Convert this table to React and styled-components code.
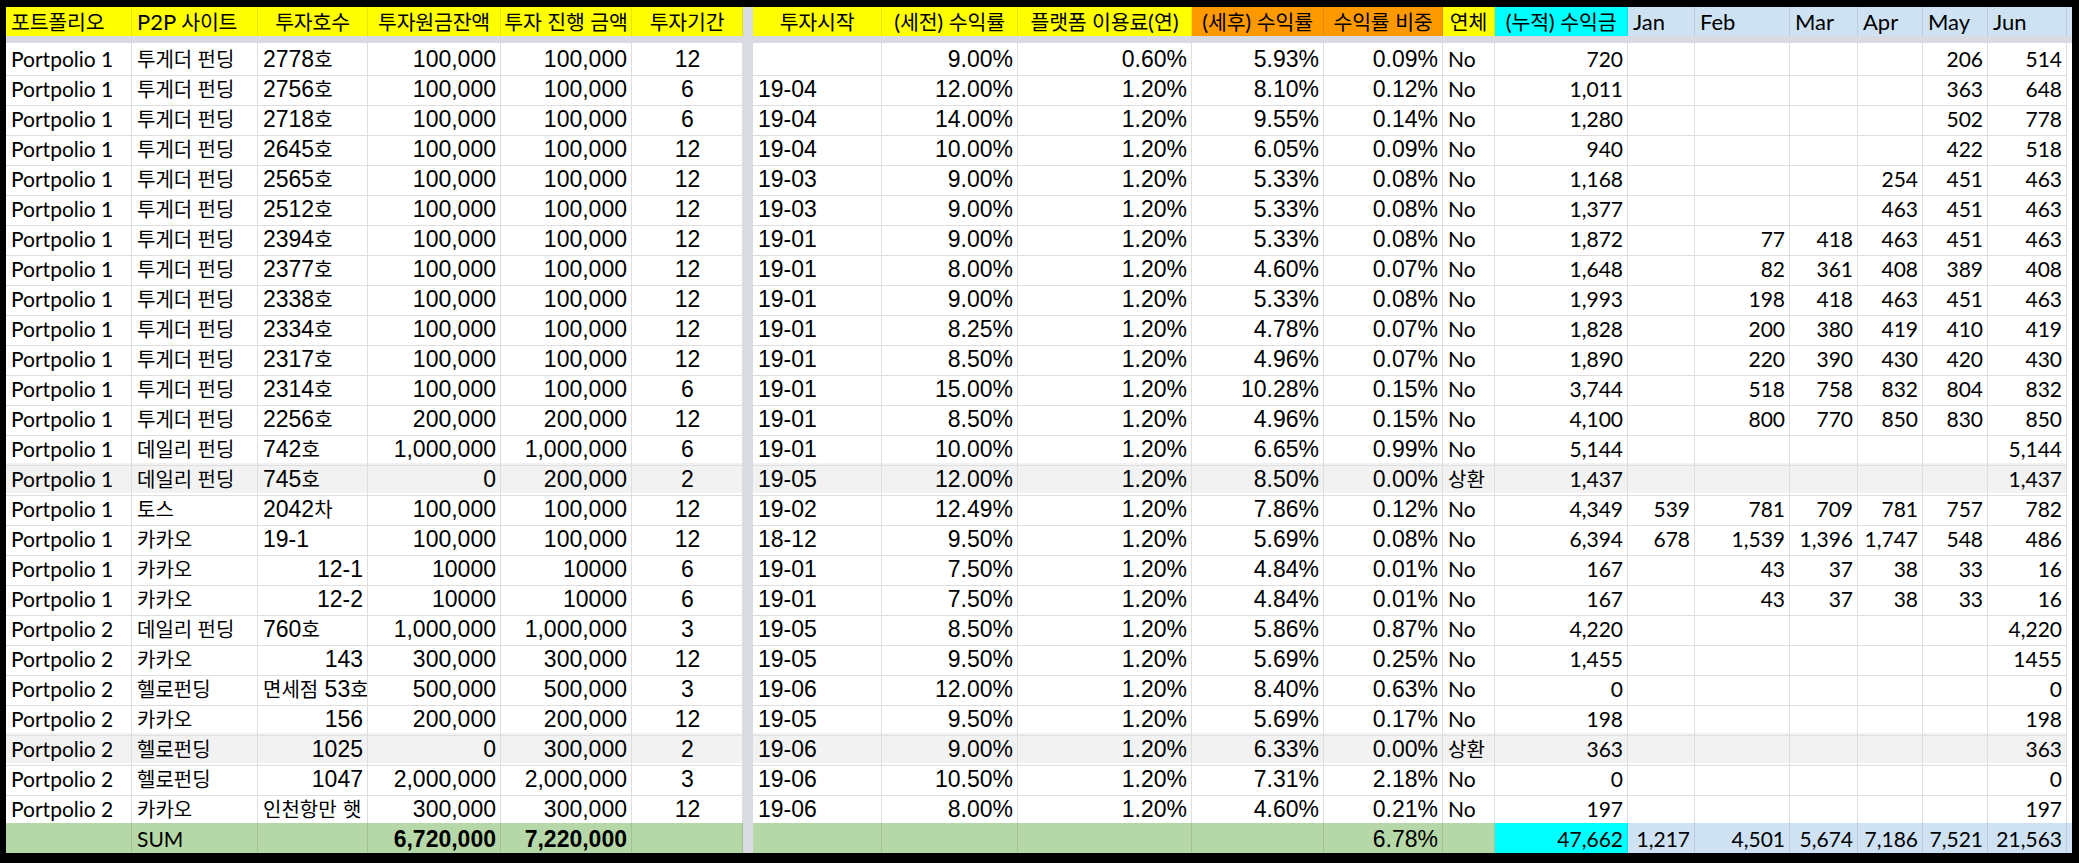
import React from "react";
import styled, { createGlobalStyle } from "styled-components";

const GlobalStyle = createGlobalStyle`
  html, body {
    margin: 0;
    padding: 0;
    background: #000;
  }
  body {
    font-family: "Lato", "Noto Sans CJK KR", sans-serif;
    color: #000;
  }
`;

// column widths in px, gridline included; the 10px one is the frozen-pane band
const COLS = [126, 126, 110, 133, 131, 111, 10, 129, 136, 174, 132, 119, 52, 133, 67, 95, 68, 65, 65, 79, 5];

const YELLOW = "#ffff00";
const ORANGE = "#ff9900";
const CYAN = "#00ffff";
const BLUE = "#cfe2f3";
const GREEN = "#b6d7a8";
const BAND = "#d9dbe0";

const META = [
  { font: "cal", align: "left", head: YELLOW, headAlign: "left" },
  { font: "cal", align: "left", head: YELLOW, headAlign: "left" },
  { font: "ari", align: "auto", head: YELLOW },
  { font: "ari", align: "right", head: YELLOW },
  { font: "ari", align: "right", head: YELLOW },
  { font: "ari", align: "center", head: YELLOW },
  { font: "ari", align: "left", head: YELLOW },
  { font: "ari", align: "right", head: YELLOW },
  { font: "ari", align: "right", head: YELLOW },
  { font: "ari", align: "right", head: ORANGE },
  { font: "ari", align: "right", head: ORANGE },
  { font: "cal", align: "left", head: YELLOW },
  { font: "cal", align: "right", head: CYAN },
  { font: "cal", align: "right", head: BLUE, headAlign: "left" },
  { font: "cal", align: "right", head: BLUE, headAlign: "left" },
  { font: "cal", align: "right", head: BLUE, headAlign: "left" },
  { font: "cal", align: "right", head: BLUE, headAlign: "left" },
  { font: "cal", align: "right", head: BLUE, headAlign: "left" },
  { font: "cal", align: "right", head: BLUE, headAlign: "left" },
];

const HEADERS = [
  "포트폴리오", "P2P 사이트", "투자호수", "투자원금잔액", "투자 진행 금액", "투자기간",
  "투자시작", "(세전) 수익률", "플랫폼 이용료(연)", "(세후) 수익률", "수익률 비중", "연체",
  "(누적) 수익금", "Jan", "Feb", "Mar", "Apr", "May", "Jun",
];

const P1 = "Portpolio 1";
const P2 = "Portpolio 2";
const TG = "투게더 펀딩";
const DL = "데일리 펀딩";
const KK = "카카오";
const HL = "헬로펀딩";
const H = "100,000";

const ROWS = [
  [P1, TG, "2778호", H, H, "12", "", "9.00%", "0.60%", "5.93%", "0.09%", "No", "720", "", "", "", "", "206", "514"],
  [P1, TG, "2756호", H, H, "6", "19-04", "12.00%", "1.20%", "8.10%", "0.12%", "No", "1,011", "", "", "", "", "363", "648"],
  [P1, TG, "2718호", H, H, "6", "19-04", "14.00%", "1.20%", "9.55%", "0.14%", "No", "1,280", "", "", "", "", "502", "778"],
  [P1, TG, "2645호", H, H, "12", "19-04", "10.00%", "1.20%", "6.05%", "0.09%", "No", "940", "", "", "", "", "422", "518"],
  [P1, TG, "2565호", H, H, "12", "19-03", "9.00%", "1.20%", "5.33%", "0.08%", "No", "1,168", "", "", "", "254", "451", "463"],
  [P1, TG, "2512호", H, H, "12", "19-03", "9.00%", "1.20%", "5.33%", "0.08%", "No", "1,377", "", "", "", "463", "451", "463"],
  [P1, TG, "2394호", H, H, "12", "19-01", "9.00%", "1.20%", "5.33%", "0.08%", "No", "1,872", "", "77", "418", "463", "451", "463"],
  [P1, TG, "2377호", H, H, "12", "19-01", "8.00%", "1.20%", "4.60%", "0.07%", "No", "1,648", "", "82", "361", "408", "389", "408"],
  [P1, TG, "2338호", H, H, "12", "19-01", "9.00%", "1.20%", "5.33%", "0.08%", "No", "1,993", "", "198", "418", "463", "451", "463"],
  [P1, TG, "2334호", H, H, "12", "19-01", "8.25%", "1.20%", "4.78%", "0.07%", "No", "1,828", "", "200", "380", "419", "410", "419"],
  [P1, TG, "2317호", H, H, "12", "19-01", "8.50%", "1.20%", "4.96%", "0.07%", "No", "1,890", "", "220", "390", "430", "420", "430"],
  [P1, TG, "2314호", H, H, "6", "19-01", "15.00%", "1.20%", "10.28%", "0.15%", "No", "3,744", "", "518", "758", "832", "804", "832"],
  [P1, TG, "2256호", "200,000", "200,000", "12", "19-01", "8.50%", "1.20%", "4.96%", "0.15%", "No", "4,100", "", "800", "770", "850", "830", "850"],
  [P1, DL, "742호", "1,000,000", "1,000,000", "6", "19-01", "10.00%", "1.20%", "6.65%", "0.99%", "No", "5,144", "", "", "", "", "", "5,144"],
  [P1, DL, "745호", "0", "200,000", "2", "19-05", "12.00%", "1.20%", "8.50%", "0.00%", "상환", "1,437", "", "", "", "", "", "1,437"],
  [P1, "토스", "2042차", H, H, "12", "19-02", "12.49%", "1.20%", "7.86%", "0.12%", "No", "4,349", "539", "781", "709", "781", "757", "782"],
  [P1, KK, "19-1", H, H, "12", "18-12", "9.50%", "1.20%", "5.69%", "0.08%", "No", "6,394", "678", "1,539", "1,396", "1,747", "548", "486"],
  [P1, KK, "12-1", "10000", "10000", "6", "19-01", "7.50%", "1.20%", "4.84%", "0.01%", "No", "167", "", "43", "37", "38", "33", "16"],
  [P1, KK, "12-2", "10000", "10000", "6", "19-01", "7.50%", "1.20%", "4.84%", "0.01%", "No", "167", "", "43", "37", "38", "33", "16"],
  [P2, DL, "760호", "1,000,000", "1,000,000", "3", "19-05", "8.50%", "1.20%", "5.86%", "0.87%", "No", "4,220", "", "", "", "", "", "4,220"],
  [P2, KK, "143", "300,000", "300,000", "12", "19-05", "9.50%", "1.20%", "5.69%", "0.25%", "No", "1,455", "", "", "", "", "", "1455"],
  [P2, HL, "면세점 53호", "500,000", "500,000", "3", "19-06", "12.00%", "1.20%", "8.40%", "0.63%", "No", "0", "", "", "", "", "", "0"],
  [P2, KK, "156", "200,000", "200,000", "12", "19-05", "9.50%", "1.20%", "5.69%", "0.17%", "No", "198", "", "", "", "", "", "198"],
  [P2, HL, "1025", "0", "300,000", "2", "19-06", "9.00%", "1.20%", "6.33%", "0.00%", "상환", "363", "", "", "", "", "", "363"],
  [P2, HL, "1047", "2,000,000", "2,000,000", "3", "19-06", "10.50%", "1.20%", "7.31%", "2.18%", "No", "0", "", "", "", "", "", "0"],
  [P2, KK, "인천항만 햇", "300,000", "300,000", "12", "19-06", "8.00%", "1.20%", "4.60%", "0.21%", "No", "197", "", "", "", "", "", "197"],
];

const SUM = ["", "SUM", "", "6,720,000", "7,220,000", "", "", "", "", "", "6.78%", "", "47,662", "1,217", "4,501", "5,674", "7,186", "7,521", "21,563"];

const FONTS = {
  cal: `font-family: "Lato", "Noto Sans CJK KR", sans-serif; font-size: 21px;`,
  ari: `font-family: "Liberation Sans", "Noto Sans CJK KR", sans-serif; font-size: 23px;`,
};

const Han = styled.span`
  font-family: "Noto Sans CJK KR", sans-serif;
  font-size: 20px;
  line-height: 1;
`;

const Sheet = styled.div`
  width: ${COLS.reduce((a, b) => a + b, 0)}px;
  margin: 7px 0 0 6px;
  background: #fff;
`;

const Row = styled.div`
  display: grid;
  grid-template-columns: ${COLS.map((c) => `${c}px`).join(" ")};
  height: ${(p) => (p.$head ? 29 : 30)}px;
  background: ${(p) => p.$bg || "#fff"};
`;

const Band = styled.div`
  height: 7px;
  background: ${BAND};
`;

const Cell = styled.div`
  box-sizing: border-box;
  height: 100%;
  padding: ${(p) => (p.$head && p.$align === "center" ? "0" : "0 4px 0 5px")};
  overflow-x: clip;
  white-space: nowrap;
  line-height: ${(p) => (p.$head ? 29 : 32)}px;
  text-align: ${(p) => p.$align};
  font-weight: ${(p) => (p.$bold ? 700 : 400)};
  background: ${(p) => p.$bg || "transparent"};
  border-right: 1px solid ${(p) => (p.$head || p.$sum ? "rgba(0,0,0,0.1)" : "#dedede")};
  border-bottom: ${(p) => (p.$head ? "none" : p.$mark ? "2px solid #1b6fdc" : "1px solid #dedede")};
  ${(p) => FONTS[p.$font]}
  ${(p) => p.$head && "font-size: 22px;"}

  & ${Han} {
    font-size: ${(p) => (p.$head ? 20.5 : 20)}px;
    letter-spacing: ${(p) => (p.$head ? -0.2 : 0)}px;
  }
`;

const Gap = styled.div`
  background: ${BAND};
`;

const Tail = styled.div`
  background: ${(p) => p.$bg || "#fff"};
  border-bottom: ${(p) => (p.$head ? "none" : "1px solid #dedede")};
`;

const withHan = (text) =>
  String(text)
    .split(/([가-힣]+)/)
    .map((part, i) => (/[가-힣]/.test(part) ? <Han key={i}>{part}</Han> : part));

const alignFor = (meta, value) => {
  if (meta.align !== "auto") return meta.align;
  return /^[0-9-]+$/.test(value) && value !== "19-1" ? "right" : "left";
};

function HeaderRow() {
  return (
    <Row $head>
      {HEADERS.map((h, i) => (
        <React.Fragment key={i}>
          {i === 6 && <Gap />}
          <Cell $head $font="cal" $bg={META[i].head} $align={META[i].headAlign || "center"}>
            {withHan(h)}
          </Cell>
        </React.Fragment>
      ))}
      <Tail $head $bg={BLUE} />
    </Row>
  );
}

function DataRow({ values, shaded }) {
  return (
    <Row $bg={shaded ? "#f2f2f2" : "#fff"}>
      {values.map((v, i) => (
        <React.Fragment key={i}>
          {i === 6 && <Gap />}
          <Cell $font={META[i].font} $align={alignFor(META[i], v)}>
            {withHan(v)}
          </Cell>
        </React.Fragment>
      ))}
      <Tail />
    </Row>
  );
}

function SumRow() {
  const bgFor = (i) => (i === 12 ? CYAN : i > 12 ? BLUE : GREEN);
  return (
    <Row>
      {SUM.map((v, i) => (
        <React.Fragment key={i}>
          {i === 6 && <Gap />}
          <Cell
            $sum
            $bg={bgFor(i)}
            $bold={i === 3 || i === 4}
            $mark={i === 10}
            $font={i === 3 || i === 4 ? "ari" : META[i].font}
            $align={i === 1 ? "left" : META[i].align === "auto" ? "left" : META[i].align}
          >
            {v}
          </Cell>
        </React.Fragment>
      ))}
      <Tail $bg={BLUE} />
    </Row>
  );
}

export default function App() {
  return (
    <>
      <GlobalStyle />
      <Sheet>
        <HeaderRow />
        <Band />
        {ROWS.map((r, i) => (
          <DataRow key={i} values={r} shaded={i === 14 || i === 23} />
        ))}
        <SumRow />
      </Sheet>
    </>
  );
}
